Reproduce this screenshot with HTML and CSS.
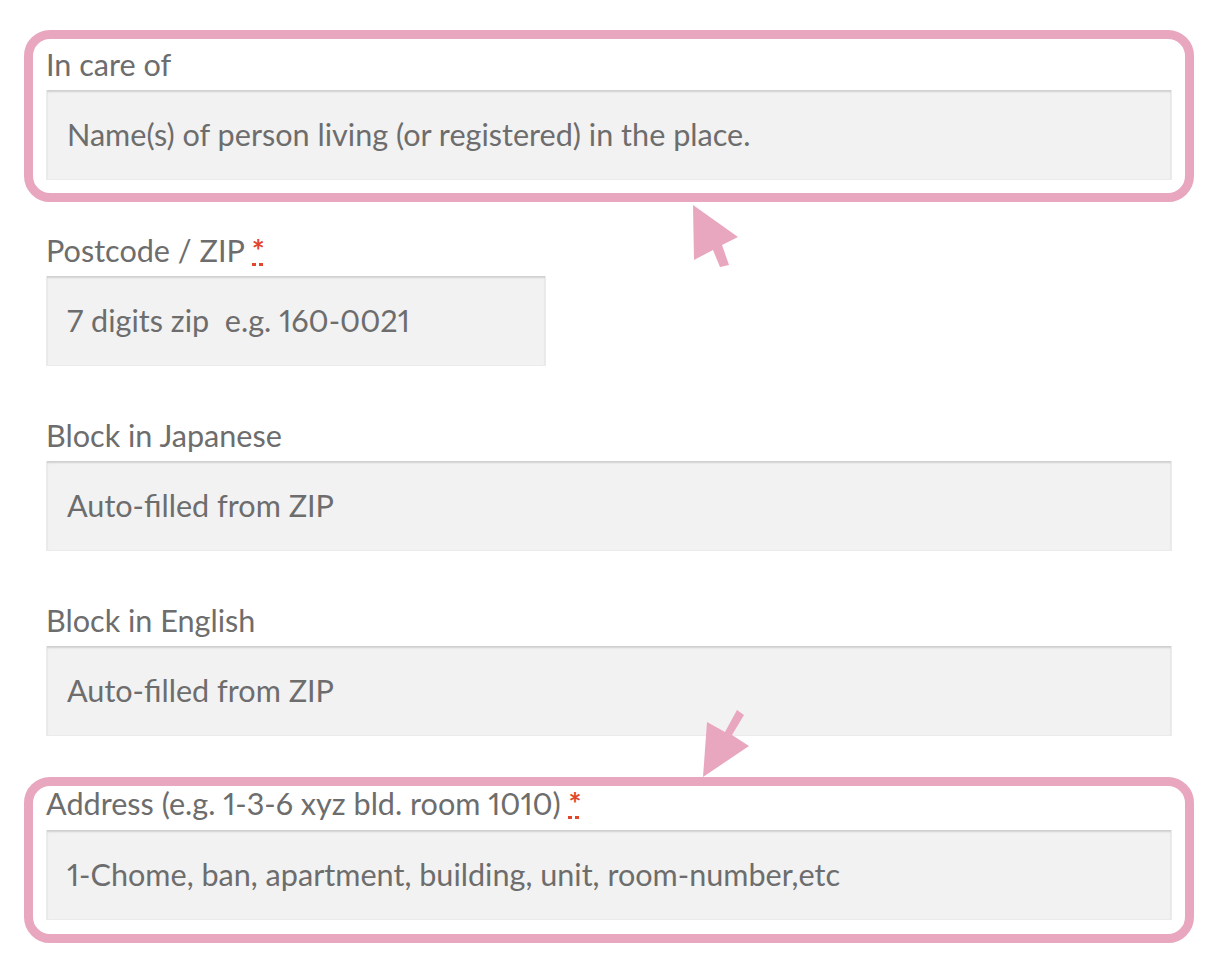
FILE: index.html
```html
<!DOCTYPE html>
<html lang="en">
<head>
<meta charset="utf-8">
<title>Address form</title>
<link rel="stylesheet" href="styles.css">
</head>
<body>
<form class="form">
  <div class="field highlight highlight-first">
    <label class="label" for="care">In care of</label>
    <input class="input" id="care" type="text" placeholder="Name(s) of person living (or registered) in the place.">
  </div>
  <div class="field">
    <label class="label" for="zip">Postcode / ZIP <abbr class="required" title="required">*</abbr></label>
    <input class="input input-short" id="zip" type="text" placeholder="7 digits zip  e.g. 160-0021">
  </div>
  <div class="field">
    <label class="label" for="jp">Block in Japanese</label>
    <input class="input" id="jp" type="text" placeholder="Auto-filled from ZIP">
  </div>
  <div class="field field-before-highlight">
    <label class="label" for="en">Block in English</label>
    <input class="input" id="en" type="text" placeholder="Auto-filled from ZIP">
  </div>
  <div class="field highlight highlight-last">
    <label class="label" for="addr">Address (e.g. 1-3-6 xyz bld. room 1010) <abbr class="required" title="required">*</abbr></label>
    <input class="input" id="addr" type="text" placeholder="1-Chome, ban, apartment, building, unit, room-number,etc">
  </div>
</form>
<svg class="arrows" width="1230" height="958" viewBox="0 0 1230 958" aria-hidden="true">
  <polygon points="693,205 738,237 722,245 729,265 720,267 713,250 694,260" fill="#e9a6bf"/>
  <polygon points="703,777 707,722 725,732 737,710 744,715 732,735 749,746" fill="#e9a6bf"/>
</svg>
</body>
</html>
```
FILE: styles.css
```css
html, body {
  margin: 0;
  padding: 0;
  background: #ffffff;
}

body {
  position: relative;
  width: 1230px;
  height: 958px;
  overflow: hidden;
  font-family: Lato, "Open Sans", sans-serif;
  font-variant-numeric: proportional-nums;
  color: #6d6d6d;
}

.form {
  width: 1126px;
  padding: 0 0 0 46px;
  margin: 0;
}

.field {
  margin: 0 0 50px 0;
}

.label {
  display: block;
  font-size: 30.6px;
  line-height: 40px;
  margin-bottom: 5px;
  color: #6d6d6d;
}

.required {
  position: relative;
  display: inline-block;
  line-height: 30px;
  color: #e2462a;
  font-weight: 700;
  text-decoration: none;
  cursor: help;
}

.required::after {
  content: "";
  position: absolute;
  left: 0;
  bottom: 0;
  width: 11px;
  height: 3px;
  background: repeating-linear-gradient(to right, #e2462a 0 4px, transparent 4px 7px);
}

.input {
  display: block;
  box-sizing: border-box;
  width: 100%;
  height: 90px;
  margin: 0;
  padding: 0 20px;
  border: 1px solid #ebebeb;
  border-top: 0;
  background: #f2f2f2;
  box-shadow: inset 0 2px 2px rgba(0, 0, 0, 0.14);
  font-family: inherit;
  font-variant-numeric: proportional-nums;
  font-size: 30.6px;
  color: #6d6d6d;
  outline: none;
}

.input::placeholder {
  color: #6d6d6d;
  opacity: 1;
}

.input-short {
  width: 500px;
}

.highlight {
  margin-left: -22px;
  margin-right: -22px;
  padding: 6px 13px 13px 13px;
  border: 9px solid #e9a6bf;
  border-radius: 26px;
}

.highlight-first {
  margin-top: 30px;
  margin-bottom: 29px;
}

.field-before-highlight {
  margin-bottom: 41px;
}

.highlight-last {
  padding-top: 0;
  padding-bottom: 14px;
  margin-bottom: 0;
}

.highlight-last .label {
  line-height: 36px;
  margin-bottom: 8px;
}

.arrows {
  position: absolute;
  top: 0;
  left: 0;
  pointer-events: none;
}
```
